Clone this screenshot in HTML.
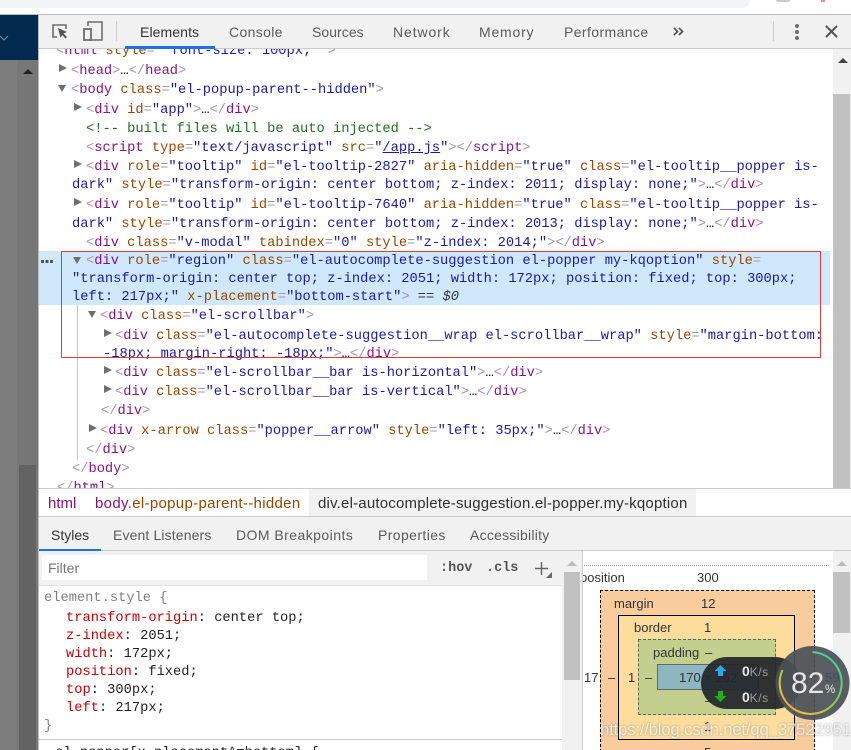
<!DOCTYPE html>
<html><head><meta charset="utf-8"><style>
html,body{margin:0;padding:0;overflow:hidden;width:851px;height:750px}
body{position:relative;background:#fff;font-family:"Liberation Sans",sans-serif}
div,svg{position:absolute}
.r{background:#ccc}
.m{font:13.72px/18px "Liberation Mono",monospace;white-space:pre;height:18px;margin-top:2px}
.t{color:#881280}.b{color:#a894a6}.a{color:#994500}.v{color:#1a1aa6}.c{color:#236e25}.k{color:#303942}
.tri{width:0;height:0;margin:-1px 0 0 -1px;border-left:8px solid #6e6e6e;border-top:4.5px solid transparent;border-bottom:4.5px solid transparent}
.trd{width:0;height:0;margin-top:-1px;border-top:7px solid #6e6e6e;border-left:4.5px solid transparent;border-right:4.5px solid transparent}
.s{font-size:14px;line-height:18px;color:#5a5a5a;white-space:pre}
.p{color:#c80000}
.bx{font-size:13px;line-height:14px;color:#333;white-space:pre}
</style></head><body>
<div style="left:0;top:0;width:851px;height:750px;overflow:hidden">
<div style="left:0;top:0;height:8px;background:#f1f3f4;border-radius:0 0 12px 0;width:750px"></div>
<div style="left:776px;top:0;width:14px;height:2px;border-radius:0 0 7px 7px;background:#ccc"></div>
<div style="left:821px;top:0;width:4px;height:2px;background:#ee8f8f"></div>
<div style="left:0;top:14px;width:851px;height:1px;background:#bbb"></div>
<div style="left:0;top:15px;width:38px;height:45px;background:#012a4e"></div>
<svg style="left:0;top:34px" width="10" height="8" viewBox="0 0 10 8"><path d="M0 2l4 4 4-4" fill="none" stroke="#7f93a8" stroke-width="1"/></svg>
<div style="left:0;top:60px;width:38px;height:690px;background:#7d7d7d"></div>
<div style="left:17px;top:60px;width:21px;height:690px;background:#777"></div>
<div style="left:19px;top:465px;width:17px;height:285px;background:#636363"></div>
<div style="left:23px;top:69px;width:0;height:0;border-bottom:5px solid #222;border-left:5px solid transparent;border-right:5px solid transparent"></div>
<div style="left:38px;top:15px;width:813px;height:735px;background:#fff"></div>
<div style="left:38px;top:15px;width:1px;height:735px;background:#bbb"></div>
<div style="left:39px;top:15px;width:812px;height:33px;background:#f1f1f1"></div>
<div class="r" style="left:39px;top:48px;width:812px;height:1px"></div>
<svg style="left:50px;top:21px" width="20" height="20" viewBox="0 0 20 20"><path d="M7 16H3V4h13v4" fill="none" stroke="#6e6e6e" stroke-width="1.6"/><path d="M8 7l9 4-3.5 1.5L17 16l-1.5 1.5-3.3-3.5L10.500 17z" fill="#555"/></svg>
<svg style="left:82px;top:20px" width="22" height="22" viewBox="0 0 22 22"><path d="M6 6V2h14v18H8" fill="none" stroke="#6e6e6e" stroke-width="1.6"/><rect x="2" y="9" width="7" height="11" fill="none" stroke="#6e6e6e" stroke-width="1.8"/></svg>
<div style="left:116px;top:21px;width:1px;height:20px;background:#ccc"></div>
<div class="s" style="left:140px;top:23px;color:#333;letter-spacing:.1px">Elements</div>
<div class="s" style="left:229px;top:23px;letter-spacing:.35px">Console</div>
<div class="s" style="left:312px;top:23px;letter-spacing:.05px">Sources</div>
<div class="s" style="left:393px;top:23px;letter-spacing:.9px">Network</div>
<div class="s" style="left:479px;top:23px;letter-spacing:.8px">Memory</div>
<div class="s" style="left:564px;top:23px;letter-spacing:.4px">Performance</div>
<svg style="left:672px;top:25px" width="14" height="14" viewBox="0 0 14 14"><path d="M2 3l3.500 3.500L2 10M7 3l3.500 3.500L7 10" fill="none" stroke="#555" stroke-width="1.800"/></svg>
<div style="left:773px;top:21px;width:1px;height:20px;background:#ccc"></div>
<div style="left:795px;top:24px;width:4px;height:4px;border-radius:2px;background:#6e6e6e"></div>
<div style="left:795px;top:30px;width:4px;height:4px;border-radius:2px;background:#6e6e6e"></div>
<div style="left:795px;top:36px;width:4px;height:4px;border-radius:2px;background:#6e6e6e"></div>
<svg style="left:825px;top:25px" width="13" height="13" viewBox="0 0 13 13"><path d="M1 1l11 11M12 1L1 12" stroke="#555" stroke-width="2"/></svg>
<div style="left:125px;top:46px;width:90px;height:3px;background:#1a73e8"></div>

<div style="left:39px;top:49px;width:794px;height:439px;overflow:hidden">
<div style="left:0;top:202px;width:791px;height:54px;background:#cfe8fc"></div>
<div style="left:38px;top:256px;width:1px;height:155px;background:#b3c8ea"></div>
<div style="left:-39px;top:-49px;width:851px;height:540px">
<div class="m" style="left:56px;top:41px"><span class="b">&lt;</span><span class="t">html</span> <span class="a">style</span><span class="b">=</span><span class="v">" font-size: 100px; "</span><span class="b">&gt;</span></div>
<div class="tri" style="left:60px;top:65px"></div>
<div class="m" style="left:71px;top:61px"><span class="b">&lt;</span><span class="t">head</span><span class="b">&gt;</span>…<span class="b">&lt;/</span><span class="t">head</span><span class="b">&gt;</span></div>
<div class="trd" style="left:58px;top:86px"></div>
<div class="m" style="left:71px;top:80px"><span class="b">&lt;</span><span class="t">body</span> <span class="a">class</span><span class="b">=</span><span class="v">"el-popup-parent--hidden"</span><span class="b">&gt;</span></div>
<div class="tri" style="left:75px;top:104px"></div>
<div class="m" style="left:86px;top:100px"><span class="b">&lt;</span><span class="t">div</span> <span class="a">id</span><span class="b">=</span><span class="v">"app"</span><span class="b">&gt;</span>…<span class="b">&lt;/</span><span class="t">div</span><span class="b">&gt;</span></div>
<div class="m c" style="left:86px;top:119px">&lt;!-- built files will be auto injected --&gt;</div>
<div class="m" style="left:86px;top:138px"><span class="b">&lt;</span><span class="t">script</span> <span class="a">type</span><span class="b">=</span><span class="v">"text/javascript"</span> <span class="a">src</span><span class="b">=</span><span class="v">"<u>/app.js</u>"</span><span class="b">&gt;&lt;/</span><span class="t">script</span><span class="b">&gt;</span></div>
<div class="tri" style="left:75px;top:161px"></div>
<div class="m" style="left:86px;top:157px"><span class="b">&lt;</span><span class="t">div</span> <span class="a">role</span><span class="b">=</span><span class="v">"tooltip"</span> <span class="a">id</span><span class="b">=</span><span class="v">"el-tooltip-2827"</span> <span class="a">aria-hidden</span><span class="b">=</span><span class="v">"true"</span> <span class="a">class</span><span class="b">=</span><span class="v">"el-tooltip__popper is-</span></div>
<div class="m" style="left:72px;top:175px"><span class="v">dark"</span> <span class="a">style</span><span class="b">=</span><span class="v">"transform-origin: center bottom; z-index: 2011; display: none;"</span><span class="b">&gt;</span>…<span class="b">&lt;/</span><span class="t">div</span><span class="b">&gt;</span></div>
<div class="tri" style="left:75px;top:199px"></div>
<div class="m" style="left:86px;top:195px"><span class="b">&lt;</span><span class="t">div</span> <span class="a">role</span><span class="b">=</span><span class="v">"tooltip"</span> <span class="a">id</span><span class="b">=</span><span class="v">"el-tooltip-7640"</span> <span class="a">aria-hidden</span><span class="b">=</span><span class="v">"true"</span> <span class="a">class</span><span class="b">=</span><span class="v">"el-tooltip__popper is-</span></div>
<div class="m" style="left:72px;top:214px"><span class="v">dark"</span> <span class="a">style</span><span class="b">=</span><span class="v">"transform-origin: center bottom; z-index: 2013; display: none;"</span><span class="b">&gt;</span>…<span class="b">&lt;/</span><span class="t">div</span><span class="b">&gt;</span></div>
<div class="m" style="left:86px;top:233px"><span class="b">&lt;</span><span class="t">div</span> <span class="a">class</span><span class="b">=</span><span class="v">"v-modal"</span> <span class="a">tabindex</span><span class="b">=</span><span class="v">"0"</span> <span class="a">style</span><span class="b">=</span><span class="v">"z-index: 2014;"</span><span class="b">&gt;&lt;/</span><span class="t">div</span><span class="b">&gt;</span></div>
<div class="trd" style="left:73px;top:258px"></div>
<div class="m" style="left:86px;top:251px"><span class="b">&lt;</span><span class="t">div</span> <span class="a">role</span><span class="b">=</span><span class="v">"region"</span> <span class="a">class</span><span class="b">=</span><span class="v">"el-autocomplete-suggestion el-popper my-kqoption"</span> <span class="a">style</span><span class="b">=</span></div>
<div class="m" style="left:72px;top:269px"><span class="v">"transform-origin: center top; z-index: 2051; width: 172px; position: fixed; top: 300px;</span></div>
<div class="m" style="left:72px;top:287px"><span class="v">left: 217px;"</span> <span class="a">x-placement</span><span class="b">=</span><span class="v">"bottom-start"</span><span class="b">&gt;</span> <span class="k">== <i>$0</i></span></div>
<div class="trd" style="left:88px;top:312px"></div>
<div class="m" style="left:100px;top:306px"><span class="b">&lt;</span><span class="t">div</span> <span class="a">class</span><span class="b">=</span><span class="v">"el-scrollbar"</span><span class="b">&gt;</span></div>
<div class="tri" style="left:105px;top:330px"></div>
<div class="m" style="left:115px;top:326px"><span class="b">&lt;</span><span class="t">div</span> <span class="a">class</span><span class="b">=</span><span class="v">"el-autocomplete-suggestion__wrap el-scrollbar__wrap"</span> <span class="a">style</span><span class="b">=</span><span class="v">"margin-bottom:</span></div>
<div class="m" style="left:103px;top:344px"><span class="v">-18px; margin-right: -18px;"</span><span class="b">&gt;</span>…<span class="b">&lt;/</span><span class="t">div</span><span class="b">&gt;</span></div>
<div class="tri" style="left:105px;top:367px"></div>
<div class="m" style="left:115px;top:363px"><span class="b">&lt;</span><span class="t">div</span> <span class="a">class</span><span class="b">=</span><span class="v">"el-scrollbar__bar is-horizontal"</span><span class="b">&gt;</span>…<span class="b">&lt;/</span><span class="t">div</span><span class="b">&gt;</span></div>
<div class="tri" style="left:105px;top:386px"></div>
<div class="m" style="left:115px;top:382px"><span class="b">&lt;</span><span class="t">div</span> <span class="a">class</span><span class="b">=</span><span class="v">"el-scrollbar__bar is-vertical"</span><span class="b">&gt;</span>…<span class="b">&lt;/</span><span class="t">div</span><span class="b">&gt;</span></div>
<div class="m" style="left:101px;top:401px"><span class="b">&lt;/</span><span class="t">div</span><span class="b">&gt;</span></div>
<div class="tri" style="left:90px;top:425px"></div>
<div class="m" style="left:100px;top:421px"><span class="b">&lt;</span><span class="t">div</span> <span class="a">x-arrow</span> <span class="a">class</span><span class="b">=</span><span class="v">"popper__arrow"</span> <span class="a">style</span><span class="b">=</span><span class="v">"left: 35px;"</span><span class="b">&gt;</span>…<span class="b">&lt;/</span><span class="t">div</span><span class="b">&gt;</span></div>
<div class="m" style="left:86px;top:440px"><span class="b">&lt;/</span><span class="t">div</span><span class="b">&gt;</span></div>
<div class="m" style="left:72px;top:459px"><span class="b">&lt;/</span><span class="t">body</span><span class="b">&gt;</span></div>
<div class="m" style="left:57px;top:478px"><span class="b">&lt;/</span><span class="t">html</span><span class="b">&gt;</span></div>
</div></div>
<div style="left:41px;top:260px;width:3px;height:3px;background:#555;box-shadow:4.500px 0 #555,9px 0 #555"></div>
<div style="left:61px;top:251px;width:758px;height:105px;border:1px solid #e33a3a"></div>

<div style="left:833px;top:49px;width:18px;height:439px;background:#f1f1f1"></div>
<div style="left:838px;top:58px;width:0;height:0;border-bottom:5px solid #444;border-left:5px solid transparent;border-right:5px solid transparent"></div>
<div style="left:833px;top:94px;width:17px;height:394px;background:#c1c1c1"></div>

<div class="r" style="left:39px;top:488px;width:812px;height:1px"></div>
<div style="left:309px;top:489px;width:387px;height:27px;background:#f1f1f1"></div>
<div style="left:48px;top:495px;font-size:15px;line-height:18px;color:#881280">html</div>
<div style="left:95px;top:495px;font-size:15px;letter-spacing:.32px;line-height:18px;color:#881280;white-space:pre">body<span style="color:#994500">.el-popup-parent--hidden</span></div>
<div style="left:318px;top:495px;font-size:15px;letter-spacing:.2px;line-height:18px;color:#303030;white-space:pre">div.el-autocomplete-suggestion.el-popper.my-kqoption</div>
<div class="r" style="left:39px;top:516px;width:812px;height:1px"></div>
<div style="left:39px;top:517px;width:812px;height:33px;background:#f1f1f1"></div>
<div class="r" style="left:39px;top:550px;width:812px;height:1px"></div>
<div style="left:39px;top:549px;width:62px;height:2px;background:#1a73e8"></div>
<div class="s" style="left:51px;top:526px;color:#333">Styles</div>
<div class="s" style="left:113px;top:526px;letter-spacing:.13px">Event Listeners</div>
<div class="s" style="left:236px;top:526px;letter-spacing:.45px">DOM Breakpoints</div>
<div class="s" style="left:378px;top:526px;letter-spacing:.4px">Properties</div>
<div class="s" style="left:470px;top:526px;letter-spacing:.25px">Accessibility</div>

<div style="left:39px;top:551px;width:523px;height:34px;background:#f1f1f1"></div>
<div style="left:42px;top:555px;width:385px;height:25px;background:#fff"></div>
<div style="left:48px;top:559px;font-size:14px;line-height:18px;color:#757575">Filter</div>
<div class="m" style="left:440px;top:560px;margin-top:0;font-weight:bold;color:#555;font-size:13.500px">:hov</div>
<div class="m" style="left:486px;top:560px;margin-top:0;font-weight:bold;color:#555;font-size:13.500px">.cls</div>
<svg style="left:534px;top:560px" width="20" height="20" viewBox="0 0 20 20"><path d="M1 8.500h13M7.500 2v13" stroke="#666" stroke-width="1.500"/><path d="M18 12v6h-6z" fill="#666"/></svg>
<div class="r" style="left:39px;top:585px;width:523px;height:1px;background:#e3e3e3"></div>
<div class="m" style="left:44px;top:588px;color:#808080">element.style {</div>
<div class="m" style="left:66px;top:608px;color:#222"><span class="p">transform-origin</span>: center top;</div>
<div class="m" style="left:66px;top:626px;color:#222"><span class="p">z-index</span>: 2051;</div>
<div class="m" style="left:66px;top:644px;color:#222"><span class="p">width</span>: 172px;</div>
<div class="m" style="left:66px;top:662px;color:#222"><span class="p">position</span>: fixed;</div>
<div class="m" style="left:66px;top:680px;color:#222"><span class="p">top</span>: 300px;</div>
<div class="m" style="left:66px;top:698px;color:#222"><span class="p">left</span>: 217px;</div>
<div class="m" style="left:44px;top:716px;color:#808080">}</div>
<div class="r" style="left:39px;top:739px;width:523px;height:1px"></div>
<div style="left:39px;top:740px;width:523px;height:10px;overflow:hidden"><div class="m" style="left:8px;top:3px;color:#222">.el-popper[x-placement^=bottom] {</div></div>

<div style="left:562px;top:551px;width:20px;height:199px;background:#f1f1f1"></div>
<div style="left:564px;top:561px;width:0;height:0;border-bottom:5px solid #bbb;border-left:5px solid transparent;border-right:5px solid transparent;margin-left:3px"></div>
<div style="left:564px;top:572px;width:16px;height:108px;background:#c1c1c1"></div>
<div class="r" style="left:582px;top:551px;width:1px;height:199px"></div>
<div style="left:584px;top:565px;width:245px;height:0;border-top:1px dotted #999"></div>
<div style="left:833px;top:551px;width:18px;height:199px;background:#f1f1f1"></div>
<div style="left:837px;top:561px;width:0;height:0;border-bottom:5px solid #bbb;border-left:5px solid transparent;border-right:5px solid transparent"></div>
<div style="left:833px;top:572px;width:17px;height:61px;background:#c1c1c1"></div>

<div style="left:583px;top:571px;width:60px;height:16px;overflow:hidden"><div class="bx" style="left:-3px;top:0">position</div></div>
<div class="bx" style="left:697px;top:571px">300</div>
<div style="left:600px;top:590px;width:213px;height:165px;background:#f9cc9d;border:1px dashed #000"></div>
<div class="bx" style="left:614px;top:597px">margin</div>
<div class="bx" style="left:701px;top:597px">12</div>
<div style="left:618px;top:615px;width:175px;height:123px;background:#fddd9b;border:1px solid #000"></div>
<div class="bx" style="left:634px;top:621px">border</div>
<div class="bx" style="left:704px;top:621px">1</div>
<div style="left:638px;top:639px;width:136px;height:74px;background:#c3cf8f;border:1px dashed #666"></div>
<div class="bx" style="left:653px;top:646px">padding</div>
<div class="bx" style="left:705px;top:646px">–</div>
<div style="left:657px;top:664px;width:100px;height:24px;background:#8cb6c0;border:1px solid #666"></div>
<div class="bx" style="left:679px;top:671px">170 × 262</div>
<div class="bx" style="left:584px;top:671px">17</div>
<div class="bx" style="left:608px;top:671px">–</div>
<div class="bx" style="left:628px;top:671px">1</div>
<div class="bx" style="left:645px;top:671px">–</div>
<div class="bx" style="left:763px;top:671px">–</div>
<div class="bx" style="left:783px;top:671px">1</div>
<div class="bx" style="left:825px;top:671px">59</div>
<div class="bx" style="left:705px;top:694px">–</div>
<div class="bx" style="left:704px;top:720px">1</div>
<div class="bx" style="left:704px;top:746px">5</div>

<div style="left:701px;top:657px;width:100px;height:52px;border-radius:26px;background:rgba(34,38,42,.93)"></div>
<svg style="left:712px;top:662px" width="20" height="44" viewBox="0 0 20 44"><path d="M7.500 3L1.500 9h3.500v5h5V9h3.500z" fill="#2ea7ea" transform="translate(1 0)"/><path d="M5 30h5v5h3.500l-6 6-6-6H5z" fill="#22ad1d" transform="translate(1 -1)"/></svg>
<div style="left:742px;top:662px;font-size:14px;line-height:18px;color:#e8e8e8;font-weight:bold;white-space:pre">0<span style="font-weight:normal;font-size:12px;color:#9a9a9a;letter-spacing:.5px">K/s</span></div>
<div style="left:742px;top:688px;font-size:14px;line-height:18px;color:#e8e8e8;font-weight:bold;white-space:pre">0<span style="font-weight:normal;font-size:12px;color:#9a9a9a;letter-spacing:.5px">K/s</span></div>
<svg style="left:775px;top:645px" width="76" height="76" viewBox="0 0 76 76">
<defs><linearGradient id="g" x1="1" y1="0" x2="0" y2="1"><stop offset="0" stop-color="#2fd0c0"/><stop offset=".5" stop-color="#8fc84e"/><stop offset=".8" stop-color="#eac33a"/><stop offset="1" stop-color="#ee6a3a"/></linearGradient></defs>
<circle cx="37.500" cy="38" r="37" fill="#4b5058" fill-opacity=".92"/>
<path d="M37.500 7A31 31 0 1 1 7.500 25" fill="none" stroke="url(#g)" stroke-width="2"/>
<text x="16" y="48" font-family="Liberation Sans,sans-serif" font-size="30" fill="#e6e6e6">82</text>
<text x="50" y="48" font-family="Liberation Sans,sans-serif" font-size="11.500" fill="#e6e6e6">%</text>
</svg>
<div style="left:600px;top:720px;font-size:17px;letter-spacing:-.3px;line-height:20px;color:rgba(255,255,255,.72);white-space:pre;text-shadow:0 0 2px rgba(90,90,90,.55)">https://blog.csdn.net/qq_37522951</div>
</div>
</body></html>
